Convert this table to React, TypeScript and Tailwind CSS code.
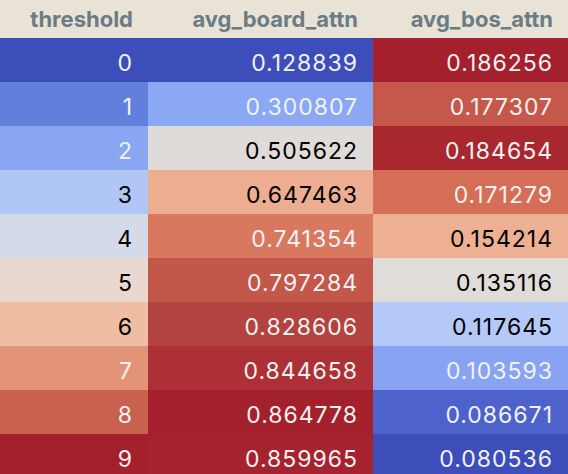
import React from "react";

type Cell = { v: string; bg: string; dark: boolean };

const rows: Cell[][] = [
	[{ v: "0", bg: "bg-[#3d4db9]", dark: true }, { v: "0.128839", bg: "bg-[#3d4db9]", dark: true }, { v: "0.186256", bg: "bg-[#a5202d]", dark: true }],
	[{ v: "1", bg: "bg-[#6080dc]", dark: true }, { v: "0.300807", bg: "bg-[#8aa8f4]", dark: true }, { v: "0.177307", bg: "bg-[#c5584a]", dark: true }],
	[{ v: "2", bg: "bg-[#88a6f2]", dark: true }, { v: "0.505622", bg: "bg-[#dfdbd8]", dark: false }, { v: "0.184654", bg: "bg-[#a9282f]", dark: true }],
	[{ v: "3", bg: "bg-[#b0c6f5]", dark: false }, { v: "0.647463", bg: "bg-[#edad90]", dark: false }, { v: "0.171279", bg: "bg-[#d46e57]", dark: true }],
	[{ v: "4", bg: "bg-[#d4dae8]", dark: false }, { v: "0.741354", bg: "bg-[#d8785f]", dark: true }, { v: "0.154214", bg: "bg-[#edb093]", dark: false }],
	[{ v: "5", bg: "bg-[#e8d8cf]", dark: false }, { v: "0.797284", bg: "bg-[#c3574a]", dark: true }, { v: "0.135116", bg: "bg-[#e0dcd9]", dark: false }],
	[{ v: "6", bg: "bg-[#eebda2]", dark: false }, { v: "0.828606", bg: "bg-[#b3433e]", dark: true }, { v: "0.117645", bg: "bg-[#b4c9f7]", dark: false }],
	[{ v: "7", bg: "bg-[#e39478]", dark: true }, { v: "0.844658", bg: "bg-[#ad3036]", dark: true }, { v: "0.103593", bg: "bg-[#88a3f2]", dark: true }],
	[{ v: "8", bg: "bg-[#c8614e]", dark: true }, { v: "0.864778", bg: "bg-[#a5202d]", dark: true }, { v: "0.086671", bg: "bg-[#4e62cc]", dark: true }],
	[{ v: "9", bg: "bg-[#a5202d]", dark: true }, { v: "0.859965", bg: "bg-[#a6222e]", dark: true }, { v: "0.080536", bg: "bg-[#3d4db9]", dark: true }],
];

const headers = ["threshold", "avg_board_attn", "avg_bos_attn"];

export default function App() {
	return (
		<div className="w-[568px] h-[474px] overflow-hidden bg-white font-['Inter',sans-serif]">
			<div className="grid grid-cols-[148px_225px_195px]">
				{headers.map((h) => (
					<div key={h} className="h-[38px] bg-[#e8e3d6] text-[#6b7c85] text-[22px] font-bold flex items-center justify-end pr-[15px]">
						{h}
					</div>
				))}
				{rows.map((r, i) =>
					r.map((c, j) => (
						<div
							key={i + "-" + j}
							className={`h-[44px] flex items-center justify-end pt-[7px] pr-[15px] text-[23px] tracking-[1px] ${c.bg} ${c.dark ? "text-[#f2f2f2]" : "text-black"}`}
						>
							{c.v}
						</div>
					))
				)}
			</div>
		</div>
	);
}
